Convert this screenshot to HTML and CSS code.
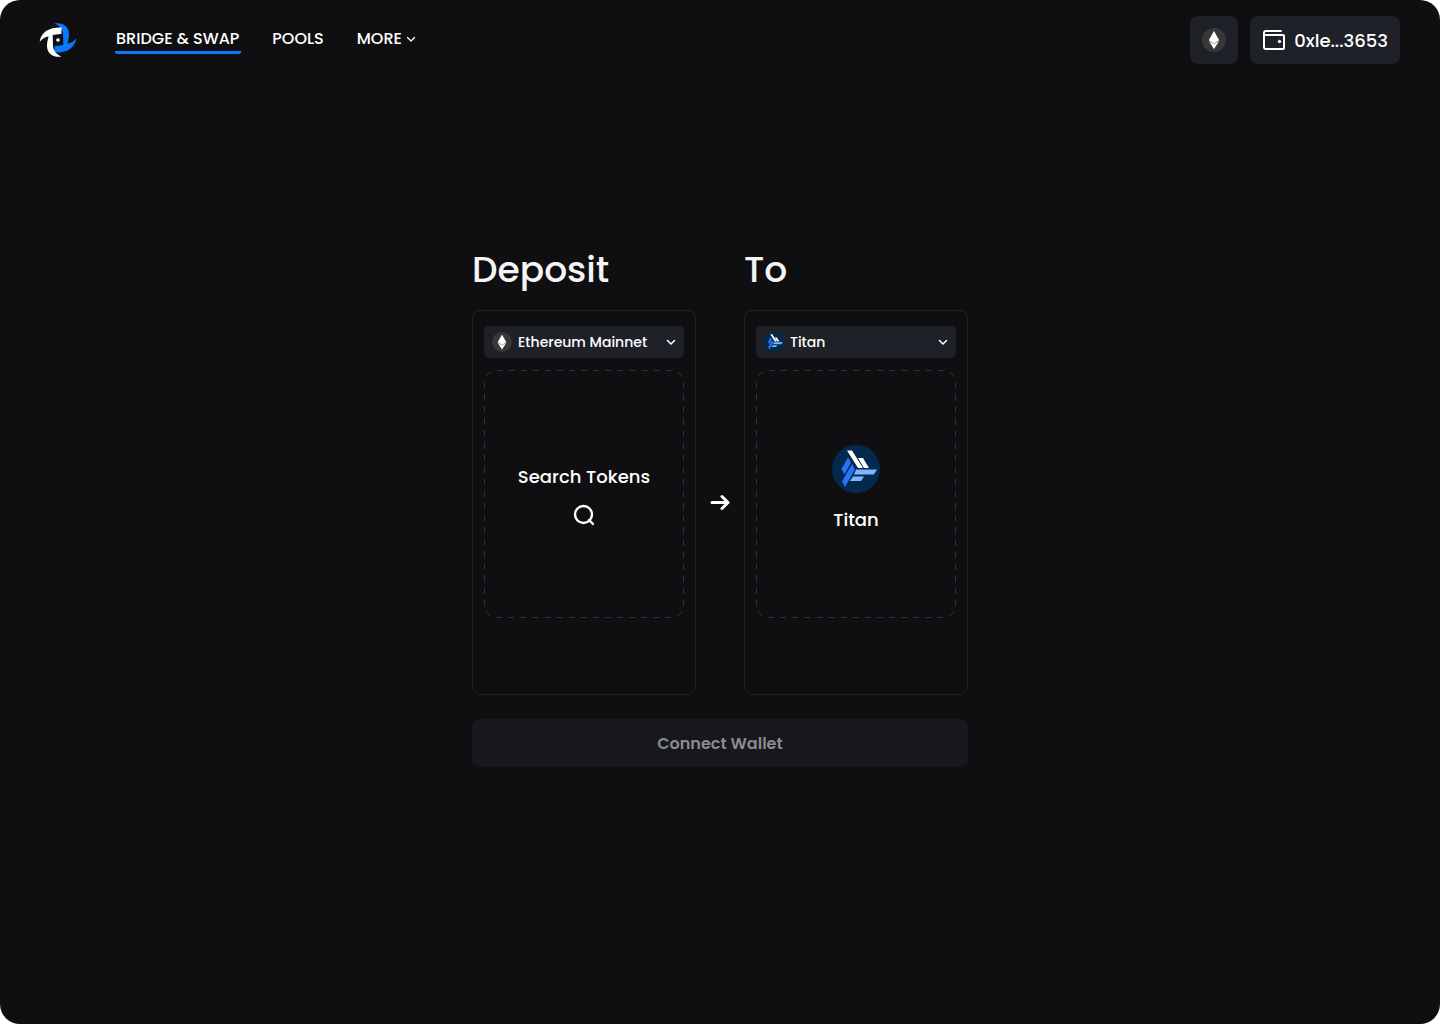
FILE: index.html
```html
<!DOCTYPE html>
<html lang="en">
<head>
<meta charset="utf-8">
<meta name="viewport" content="width=device-width, initial-scale=1">
<title>Bridge &amp; Swap</title>
<link rel="stylesheet" href="styles.css">
</head>
<body>
<svg class="sprite" aria-hidden="true">
  <symbol id="eth" viewBox="0 0 24 24">
    <circle cx="12" cy="12" r="12" fill="#383838"/>
    <path d="M12 3l5.200 9.200L12 15.600l-5.200-3.400z" fill="#fff"/>
    <path d="M6.800 13L12 16.200l5.200-3.200L12 21z" fill="#fff"/>
    <path d="M12 15.300l4.500-2.700L12 16.500l-4.500-3.900z" fill="#d8d8d8"/>
  </symbol>
  <symbol id="titan" viewBox="0 0 48 48">
    <circle cx="24" cy="24" r="24" fill="#04294e"/>
    <path d="M15 5.500h5L31 23h-5z M26 13h5l6 10h-5z" fill="#fff"/>
    <path d="M24 24.500h21l-3 5H22z M21 31.500h11l-3 4.500H18z" fill="#7db5ff"/>
    <path d="M16 12.500l3 5-6.500 12-3-5.500z M20 19l3 5.500L13 42l-3-5.500z" fill="#2a73f5"/>
  </symbol>
  <symbol id="chevron" viewBox="0 0 12 12">
    <path d="M2.500 4.500L6 8l3.500-3.500" fill="none" stroke="currentColor" stroke-linecap="round" stroke-linejoin="round"/>
  </symbol>
  <symbol id="blade" viewBox="0 0 38 36">
    <path d="M15.500 1.500C23 0 30 4 30 12c0 3.500-.8 6.500-1.600 9.500C32 21 35 19.500 37.300 16c-.3 4.500-2.800 8.500-6.300 11C26 30 20 31 15 30.500c.8-2.500.8-5 .3-6.300l9-1.200-.3-11C23.800 7.500 20 3 15.500 1.500z" fill="currentColor"/>
  </symbol>
</svg>
<div class="app">
  <header class="header">
    <a class="logo" href="#" aria-label="Home">
      <svg width="38" height="36" viewBox="0 0 38 36" aria-hidden="true">
        <use href="#blade" color="#0a78ff" width="38" height="36"/>
        <use href="#blade" color="#fff" width="38" height="36" transform="rotate(180 19 18)"/>
        <circle cx="19" cy="18" r="1.800" fill="#fff"/>
      </svg>
    </a>
    <nav class="nav">
      <a class="nav-item active" href="#">BRIDGE &amp; SWAP</a>
      <a class="nav-item" href="#">POOLS</a>
      <button class="nav-item" type="button">MORE <svg class="chevron"><use href="#chevron"/></svg></button>
    </nav>
    <div class="account">
      <button class="chip" type="button" aria-label="Ethereum network"><svg width="24" height="24"><use href="#eth"/></svg></button>
      <button class="chip" type="button">
        <svg width="24" height="24" viewBox="0 0 24 24" fill="none" stroke="#fff" stroke-width="2" stroke-linejoin="round" stroke-linecap="round" aria-hidden="true"><path d="M19 3H4a2 2 0 0 0-2 2v14a2 2 0 0 0 2 2h17a1 1 0 0 0 1-1V8a1 1 0 0 0-1-1H2"/><circle cx="17.500" cy="13.500" r="1.200" fill="#fff" stroke-width="1"/></svg>
        0xle...3653
      </button>
    </div>
  </header>
  <main class="bridge">
    <div class="transfer">
      <section class="side">
        <h1 class="title">Deposit</h1>
        <div class="panel">
          <div class="picker">
            <svg class="picker-icon" aria-hidden="true"><use href="#eth"/></svg>
            <select class="network" aria-label="Deposit from network"><option>Ethereum Mainnet</option><option>Titan</option></select>
            <svg class="picker-arrow" aria-hidden="true"><use href="#chevron"/></svg>
          </div>
          <button class="slot search" type="button">
            <svg class="outline" viewBox="0 0 200 248" preserveAspectRatio="none" aria-hidden="true"><rect x=".5" y=".5" width="199" height="247" rx="12" pathLength="864"/></svg>
            Search Tokens
            <svg width="24" height="24" viewBox="0 0 24 24" fill="none" stroke="#fff" stroke-width="2.400" stroke-linecap="round" aria-hidden="true"><circle cx="11.500" cy="11.500" r="8.500"/><path d="M17 17l4 4"/></svg>
          </button>
        </div>
      </section>
      <svg class="arrow" viewBox="0 0 24 24" aria-hidden="true"><path d="M4 11.500h16M14 5.500l6 6-6 6"/></svg>
      <section class="side">
        <h2 class="title">To</h2>
        <div class="panel">
          <div class="picker">
            <svg class="picker-icon" aria-hidden="true"><use href="#titan"/></svg>
            <select class="network" aria-label="Deposit to network"><option>Titan</option><option>Ethereum Mainnet</option></select>
            <svg class="picker-arrow" aria-hidden="true"><use href="#chevron"/></svg>
          </div>
          <div class="slot token">
            <svg class="outline" viewBox="0 0 200 248" preserveAspectRatio="none" aria-hidden="true"><rect x=".5" y=".5" width="199" height="247" rx="12" pathLength="864"/></svg>
            <svg width="48" height="48" aria-hidden="true"><use href="#titan"/></svg>
            Titan
          </div>
        </div>
      </section>
    </div>
    <button class="connect" type="button">Connect Wallet</button>
  </main>
</div>
</body>
</html>
```

FILE: styles.css
```css
* { box-sizing: border-box; }
body {
  margin: 0;
  background: #fff;
  color: #fff;
  font-family: Poppins, Inter, sans-serif;
  font-size: 16px;
  font-weight: 500;
}
button, select {
  margin: 0;
  padding: 0;
  border: 0;
  background: none;
  color: inherit;
  font: inherit;
  cursor: pointer;
}
a { color: inherit; text-decoration: none; }
svg { display: block; flex: none; }
.sprite { position: absolute; width: 0; height: 0; }

.app {
  display: flex;
  flex-direction: column;
  min-height: 100vh;
  border-radius: 20px;
  background: #0f0f11;
}

.header {
  display: flex;
  align-items: center;
  padding: 16px 40px 16px 39px;
}
.nav {
  display: flex;
  gap: 30px;
  margin-left: 38px;
}
.nav-item {
  display: flex;
  align-items: center;
  gap: 3px;
  padding: 0 2px 0 1px;
  border-bottom: 3px solid transparent;
  line-height: 24px;
}
.nav-item.active { border-color: #0a78ff; border-radius: 2px; }
.chevron { width: 12px; height: 12px; stroke-width: 1.25px; }
.account {
  display: flex;
  gap: 12px;
  margin-left: auto;
}
.chip {
  display: flex;
  align-items: center;
  gap: 8px;
  height: 48px;
  padding: 0 12px;
  border-radius: 8px;
  background: #1e2128;
  font-size: 18px;
}

.bridge {
  display: flex;
  flex-direction: column;
  gap: 24px;
  width: 100%;
  max-width: 496px;
  margin: 0 auto;
  padding-top: 162px;
}
.transfer {
  display: flex;
  align-items: flex-end;
  justify-content: space-between;
}
.side { width: 224px; }
.title {
  margin: 0 0 12px;
  font-size: 36px;
  font-weight: 500;
  line-height: 56px;
  color: #f5f5f5;
}
.panel {
  display: flex;
  flex-direction: column;
  gap: 12px;
  min-height: 385px;
  padding: 15px 11px;
  border: 1px solid #202126;
  border-radius: 8px;
}
.picker { position: relative; }
.network {
  appearance: none;
  width: 100%;
  height: 32px;
  padding: 0 28px 0 34px;
  border-radius: 5px;
  background: #1e2128;
  font-size: 14px;
}
.picker-icon, .picker-arrow {
  position: absolute;
  pointer-events: none;
}
.picker-icon { top: 6px; left: 8px; width: 20px; height: 20px; }
.picker-arrow { top: 10px; right: 7px; width: 12px; height: 12px; stroke-width: 1.5px; }
.slot {
  position: relative;
  display: flex;
  flex-direction: column;
  align-items: center;
  justify-content: center;
  width: 100%;
  height: 248px;
  font-size: 18px;
  line-height: 26px;
}
.search { gap: 13px; padding-top: 2px; }
.token { gap: 14px; padding-bottom: 10px; }
.outline {
  position: absolute;
  inset: 0;
  width: 100%;
  height: 100%;
  fill: none;
  stroke: #2f3140;
  stroke-dasharray: 6 6;
}
.arrow {
  width: 24px;
  height: 24px;
  margin-bottom: 180px;
  fill: none;
  stroke: #fff;
  stroke-width: 3px;
  stroke-linecap: round;
  stroke-linejoin: round;
}
.connect {
  height: 48px;
  border-radius: 8px;
  background: #17181d;
  color: #8b8b8f;
  font-weight: 600;
}
```
